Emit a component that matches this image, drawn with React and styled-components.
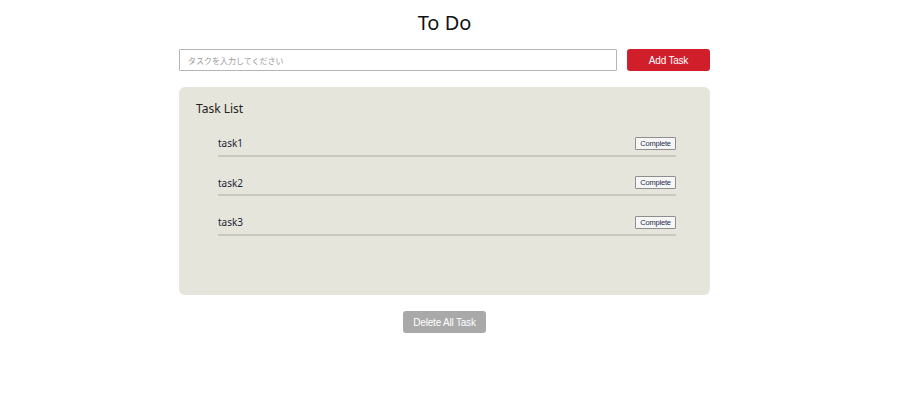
import React from "react";
import styled, { createGlobalStyle } from "styled-components";

const Global = createGlobalStyle`
  html, body { margin: 0; padding: 0; background: #ffffff; }
  body { font-family: "Noto Sans", "Noto Sans CJK JP", sans-serif; color: #1a1a1a; }
`;

const Page = styled.div`
  display: flex;
  justify-content: center;
  padding-right: 11px;
`;

const Container = styled.div`
  width: 531px;
  display: flex;
  flex-direction: column;
  align-items: stretch;
`;

const Title = styled.h1`
  margin: 10px 0 0;
  height: 26px;
  line-height: 26px;
  font-size: 20px;
  font-weight: 400;
  text-align: center;
  color: #111;
`;

const InputRow = styled.div`
  display: flex;
  gap: 10px;
  margin-top: 13px;
  height: 22px;
`;

const TaskInput = styled.input`
  flex: 1;
  box-sizing: border-box;
  height: 22px;
  border: 1px solid #b5b5b5;
  border-radius: 1px;
  padding: 0 8px;
  font-family: "Noto Sans CJK JP", sans-serif;
  font-size: 8px;
  outline: none;
  &::placeholder { color: #9a9a9a; }
`;

const Button = styled.button`
  width: 83px;
  height: 22px;
  border: none;
  border-radius: 3px;
  background: ${(p) => p.$bg};
  color: #ffffff;
  font-family: "Liberation Sans", sans-serif;
  font-size: 10px;
  letter-spacing: -0.2px;
  padding: 0;
  cursor: pointer;
`;

const Panel = styled.section`
  margin-top: 16px;
  height: 208px;
  box-sizing: border-box;
  background: #e6e5dc;
  border-radius: 6px;
  padding: 14px 34px 0 17px;
`;

const PanelTitle = styled.h2`
  margin: 0;
  font-size: 12px;
  font-weight: 400;
  line-height: 16px;
  color: #222;
`;

const List = styled.ul`
  list-style: none;
  margin: 0 0 0 22px;
  padding: 0;
`;

const Row = styled.li`
  display: flex;
  align-items: center;
  justify-content: space-between;
  height: 39.5px;
  box-sizing: border-box;
  padding-top: 15px;
  border-bottom: 2px solid #cac9c1;
`;

const TaskText = styled.span`
  font-size: 10px;
  color: #1e2535;
`;

const CompleteButton = styled.button`
  width: 41px;
  height: 13px;
  box-sizing: border-box;
  padding: 0;
  border: 1px solid #8e8e8e;
  border-radius: 1px;
  background: #f6f6f4;
  color: #1f2f55;
  font-family: "Liberation Sans", sans-serif;
  font-size: 7.5px;
  letter-spacing: -0.2px;
  line-height: 11px;
`;

const Footer = styled.div`
  display: flex;
  justify-content: center;
  margin-top: 16px;
`;

const tasks = ["task1", "task2", "task3"];

export default function App() {
  return (
    <>
      <Global />
      <Page>
        <Container>
          <Title>To Do</Title>
          <InputRow>
            <TaskInput placeholder="タスクを入力してください" />
            <Button $bg="#d01f2b">Add Task</Button>
          </InputRow>
          <Panel>
            <PanelTitle>Task List</PanelTitle>
            <List>
              {tasks.map((t) => (
                <Row key={t}>
                  <TaskText>{t}</TaskText>
                  <CompleteButton>Complete</CompleteButton>
                </Row>
              ))}
            </List>
          </Panel>
          <Footer>
            <Button $bg="#a9a9a9">Delete All Task</Button>
          </Footer>
        </Container>
      </Page>
    </>
  );
}
